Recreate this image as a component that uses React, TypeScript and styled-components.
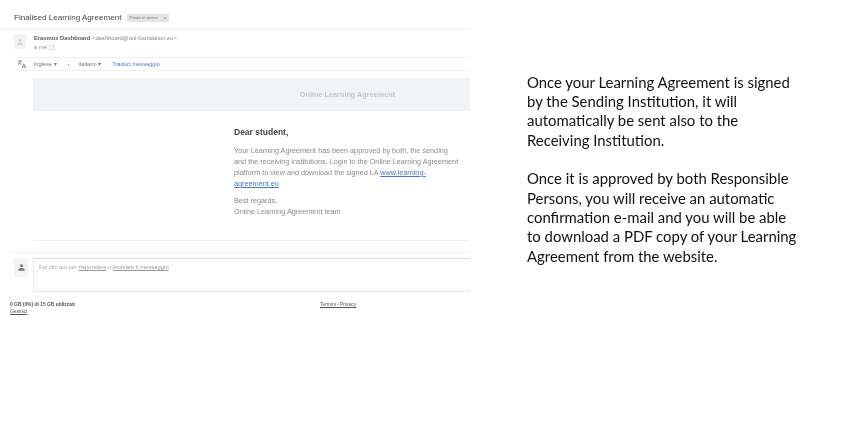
import React from 'react';
import styled, { createGlobalStyle } from 'styled-components';

const GlobalStyle = createGlobalStyle`
  html, body {
    margin: 0;
    padding: 0;
    background: #fff;
    overflow: hidden;
  }
`;

const Page = styled.div`
  width: 850px;
  height: 423px;
  display: flex;
  font-family: 'Liberation Sans', Arial, sans-serif;
  background: #fff;
`;

/* the mail is a scaled-down screenshot in the original, hence the soft edges */
const MailColumn = styled.div`
  width: 470px;
  flex: none;
  padding-top: 12px;
  box-sizing: border-box;
  filter: blur(0.35px);
`;

const SubjectRow = styled.div`
  display: flex;
  align-items: center;
  height: 11px;
  padding: 0 0 5px 14px;
  border-bottom: 1px solid #eeeeee;
  margin-bottom: 5px;
`;

const Subject = styled.span`
  font-size: 8.1px;
  color: #444;
  margin-right: 5px;
`;

const Label = styled.span`
  display: inline-flex;
  align-items: center;
  gap: 6px;
  height: 8px;
  padding: 0 3px;
  font-size: 4.4px;
  color: #777;
  background: #e4e4e4;
`;

const SenderRow = styled.div`
  display: flex;
  gap: 8px;
  padding-left: 14px;
  height: 16px;
`;

const Avatar = styled.div<{ $width: number; $height: number }>`
  width: ${props => props.$width}px;
  height: ${props => props.$height}px;
  flex: none;
  display: flex;
  align-items: center;
  justify-content: center;
  background: #f3f3f3;
`;

const SenderInfo = styled.div`
  display: flex;
  flex-direction: column;
  gap: 3px;
  padding-top: 1px;
  font-size: 5.8px;
  line-height: 6px;
  color: #888;
`;

const SenderName = styled.b`
  color: #555;
`;

const MeRow = styled.div`
  display: flex;
  align-items: center;
  gap: 2px;
`;

const MeCaret = styled.span`
  display: inline-block;
  width: 3px;
  height: 3px;
  border: 1px solid #ddd;
`;

const TranslateBar = styled.div`
  display: flex;
  align-items: center;
  height: 12px;
  margin: 7px 0 7px 17px;
  border-top: 1px solid #eeeeee;
  border-bottom: 1px solid #eeeeee;
  font-size: 5.7px;
  color: #777;
`;

const TranslateIcon = styled.svg`
  width: 10px;
  height: 10px;
  margin-right: 7px;
  flex: none;
`;

const LangItem = styled.span<{ $gap: number }>`
  margin-right: ${props => props.$gap}px;
`;

const TranslateLink = styled.span`
  color: #4a77c9;
`;

const Banner = styled.div`
  margin-left: 33px;
  height: 33px;
  display: flex;
  align-items: center;
  justify-content: center;
  padding-left: 192px;
  box-sizing: border-box;
  background: #f2f3f4;
  font-size: 7.3px;
  font-weight: bold;
  color: #c4c6c9;
  white-space: nowrap;
`;

const Message = styled.div`
  margin-left: 234px;
  padding-top: 16px;
  height: 129px;
  box-sizing: border-box;
  color: #8a8a8a;
  font-size: 7.28px;
  line-height: 11px;
`;

const Greeting = styled.div`
  font-size: 8.5px;
  font-weight: bold;
  color: #444;
  line-height: 11px;
  margin-bottom: 7px;
`;

const Paragraph = styled.p`
  margin: 0 0 6px;
  white-space: nowrap;
`;

const MailLink = styled.span`
  color: #4a77c9;
  text-decoration: underline;
`;

const Rule = styled.div<{ $left: number; $gap: number }>`
  height: 1px;
  margin: 0 0 ${props => props.$gap}px ${props => props.$left}px;
  background: #f1f1f1;
`;

const ReplyRow = styled.div`
  display: flex;
  gap: 5px;
  padding-left: 14px;
`;

const ReplyBox = styled.div`
  flex: 1;
  height: 34px;
  padding: 5px 5px;
  box-sizing: border-box;
  border-top: 1px solid #dddddd;
  border-bottom: 1px solid #e8e8e8;
  border-left: 1px solid #e8e8e8;
  font-size: 5.9px;
  line-height: 6px;
  color: #aaa;
`;

const ReplyLink = styled.span`
  text-decoration: underline;
  color: #999;
`;

const Footer = styled.div`
  display: flex;
  padding: 9px 0 0 10px;
  font-size: 4.9px;
  line-height: 7px;
  color: #555;
`;

const Quota = styled.div`
  width: 310px;
  font-weight: bold;
`;

const Manage = styled.div`
  font-weight: normal;
  text-decoration: underline;
`;

const FooterLinks = styled.div`
  text-decoration: underline;
`;

const Note = styled.div`
  margin-left: 57px;
  padding-top: 72.5px;
  width: 290px;
  font-family: Lato, 'Open Sans', sans-serif;
  font-size: 14.9px;
  line-height: 19.35px;
  color: #111;
  white-space: nowrap;
  filter: blur(0.2px);
`;

const NoteParagraph = styled.p`
  margin: 0 0 19.35px;
`;

const PersonIcon = ({ size, color }: { size: number; color: string }) => (
  <svg width={size} height={size} viewBox="0 0 12 12">
    <circle cx="6" cy="3.6" r="2.1" fill={color} />
    <path d="M1.8 10.4V9c0-1.5 2.8-2.3 4.2-2.3s4.2.8 4.2 2.3v1.4z" fill={color} />
  </svg>
);

export default function App() {
  return (
    <Page>
      <GlobalStyle />
      <MailColumn>
        <SubjectRow>
          <Subject>Finalised Learning Agreement</Subject>
          <Label>
            <span>Posta in arrivo</span>
            <span>x</span>
          </Label>
        </SubjectRow>
        <SenderRow>
          <Avatar $width={12} $height={15}>
            <PersonIcon size={8} color="#d4d4d4" />
          </Avatar>
          <SenderInfo>
            <div>
              <SenderName>Erasmus Dashboard</SenderName> &lt;dashboard@uni-foundation.eu&gt;
            </div>
            <MeRow>
              a me <MeCaret />
            </MeRow>
          </SenderInfo>
        </SenderRow>
        <TranslateBar>
          <TranslateIcon viewBox="0 0 12 12" fill="none" stroke="#666" strokeWidth="0.8">
            <path d="M0.8 2.5h5.4M3.4 1v1.5M5 2.5C4.5 4.2 3 5.8 1 6.6M2 3.8c.6 1.2 1.6 2.2 3 2.8" />
            <path d="M6 11l2.2-5.4L10.6 11M6.8 9.4h3.2" />
          </TranslateIcon>
          <LangItem $gap={11}>inglese ▾</LangItem>
          <LangItem $gap={9}>›</LangItem>
          <LangItem $gap={11}>italiano ▾</LangItem>
          <TranslateLink>Traduci messaggio</TranslateLink>
        </TranslateBar>
        <Banner>Online Learning Agreement</Banner>
        <Message>
          <Greeting>Dear student,</Greeting>
          <Paragraph>
            Your Learning Agreement has been approved by both, the sending
            <br />
            and the receiving institutions. Login to the Online Learning Agreement
            <br />
            platform to view and download the signed LA <MailLink>www.learning-</MailLink>
            <br />
            <MailLink>agreement.eu</MailLink>
          </Paragraph>
          <Paragraph>
            Best regards,
            <br />
            Online Learning Agreement team
          </Paragraph>
        </Message>
        <Rule $left={33} $gap={11} />
        <Rule $left={10} $gap={5} />
        <ReplyRow>
          <Avatar $width={14} $height={19}>
            <PersonIcon size={9} color="#777" />
          </Avatar>
          <ReplyBox>
            Fai clic qui per <ReplyLink>rispondere</ReplyLink> o <ReplyLink>inoltrare il messaggio</ReplyLink>
          </ReplyBox>
        </ReplyRow>
        <Footer>
          <Quota>
            0 GB (0%) di 15 GB utilizzati
            <Manage>Gestisci</Manage>
          </Quota>
          <FooterLinks>Termini - Privacy</FooterLinks>
        </Footer>
      </MailColumn>
      <Note>
        <NoteParagraph>
          Once your Learning Agreement is signed
          <br />
          by the Sending Institution, it will
          <br />
          automatically be sent also to the
          <br />
          Receiving Institution.
        </NoteParagraph>
        <NoteParagraph>
          Once it is approved by both Responsible
          <br />
          Persons, you will receive an automatic
          <br />
          confirmation e-mail and you will be able
          <br />
          to download a PDF copy of your Learning
          <br />
          Agreement from the website.
        </NoteParagraph>
      </Note>
    </Page>
  );
}
